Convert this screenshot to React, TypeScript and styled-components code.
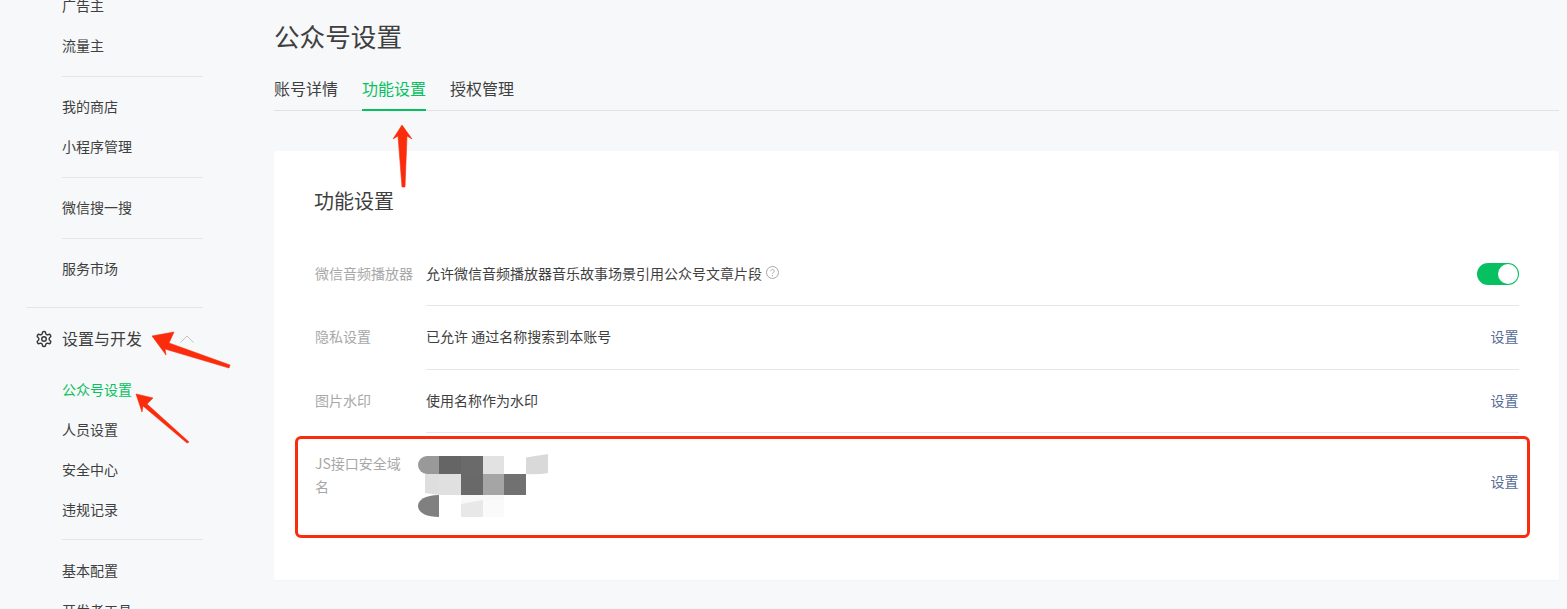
import React from "react";
import styled, { createGlobalStyle } from "styled-components";

const Global = createGlobalStyle`
  html, body { margin: 0; padding: 0; height: 609px; overflow: hidden; background: #f6f8f9; }
  body { font-family: "Noto Sans CJK SC", "Liberation Sans", sans-serif; color: #3f3f3f; }
  * { box-sizing: border-box; }
`;

const Page = styled.div`
  position: relative;
  display: flex;
  width: 1567px;
  height: 609px;
  overflow: hidden;
`;

const Sidebar = styled.nav`
  width: 274px;
  flex: none;
  padding: 0 71px 0 26px;
  margin-top: -14px;
`;

const Group = styled.div`
  margin-left: 36px;
  padding: 0 0 10px;
  margin-bottom: 10px;
  border-bottom: 1px solid #e4e6e9;
`;

const LastGroup = styled(Group)`
  border-bottom: none;
  margin-bottom: 0;
  padding-bottom: 0;
`;

const Item = styled.div<{ $active?: boolean; $raised?: boolean }>`
  height: 40px;
  line-height: ${(p) => (p.$raised ? "38px" : "40px")};
  font-size: 14px;
  color: ${(p) => (p.$active ? "#07c160" : "#3f3f3f")};
`;

const Section = styled.div`
  border-top: 1px solid #e4e6e9;
  margin-top: 18px;
  padding-top: 11px;
`;

const SectionHead = styled.div`
  display: flex;
  align-items: center;
  height: 40px;
  font-size: 16px;
  margin-bottom: 10px;
  color: #3f3f3f;
`;

const SectionLabel = styled.span`
  padding-bottom: 2px;
`;

const GearSlot = styled.span`
  width: 36px;
  display: flex;
  justify-content: flex-start;
  padding-left: 9px;
`;

const Chevron = styled.svg`
  margin-left: 38px;
`;

const Main = styled.main`
  flex: 1;
  padding-right: 8px;
`;

const Title = styled.h1`
  margin: 0;
  padding-top: 17px;
  height: 66px;
  font-size: 25.6px;
  line-height: 38px;
  font-weight: 400;
  color: #3f3f3f;
`;

const Tabs = styled.div`
  display: flex;
  gap: 24px;
  height: 45px;
  border-bottom: 1px solid #e0e2e5;
`;

const Tab = styled.div<{ $active?: boolean }>`
  height: 45px;
  line-height: 45px;
  font-size: 16px;
  color: ${(p) => (p.$active ? "#07c160" : "#3f3f3f")};
  border-bottom: 2px solid ${(p) => (p.$active ? "#07c160" : "transparent")};
`;

const Card = styled.section`
  margin-top: 40px;
  height: 429px;
  background: #fff;
  border-radius: 2px;
  padding: 36px 40px 0 40px;
  box-shadow: 0 1px 2px rgba(150, 150, 150, 0.05);
`;

const CardTitle = styled.h2`
  margin: 0 0 27px;
  font-size: 20px;
  line-height: 28px;
  font-weight: 400;
  color: #3f3f3f;
`;

const Row = styled.div<{ $height: number; $lift?: number; $last?: boolean }>`
  --lift: ${(p) => p.$lift ?? 0}px;
  display: flex;
  align-items: ${(p) => (p.$last ? "flex-start" : "center")};
  height: ${(p) => p.$height}px;
  padding: ${(p) => (p.$last ? "19px 0 21px" : "0")};
`;

const Label = styled.div`
  width: 112px;
  flex: none;
  font-size: 14px;
  line-height: 23px;
  color: #a8a8a8;
  padding: 0 12px var(--lift) 1px;
`;

const Value = styled.div`
  flex: 1;
  display: flex;
  align-items: center;
  font-size: 14px;
  line-height: 22px;
  color: #3f3f3f;
  padding-bottom: var(--lift);
`;

const RowBody = styled.div`
  flex: 1;
  display: flex;
  align-items: center;
  align-self: stretch;
  border-bottom: 1px solid #e6e7e9;
`;

const HelpIcon = styled.svg`
  margin-left: 4px;
`;

const Link = styled.span<{ $center?: boolean }>`
  font-size: 14px;
  color: #576b95;
  flex: none;
  padding-right: 0.5px;
  padding-bottom: var(--lift);
  ${(p) => (p.$center ? "align-self: center;" : "")}
`;

const Toggle = styled.span`
  flex: none;
  width: 42px;
  height: 22px;
  border-radius: 11px;
  background: #07c160;
  display: flex;
  justify-content: flex-end;
  padding: 1px;
`;

const Knob = styled.span`
  width: 20px;
  height: 20px;
  border-radius: 50%;
  background: #fff;
`;

const MosaicBox = styled.svg`
  display: block;
  margin-left: -8px;
  margin-top: 2px;
  height: 63px;
  width: 130px;
`;

const MosaicSlot = styled.div`
  flex: 1;
  height: 58px;
`;

const Highlight = styled.div`
  position: absolute;
  left: 295px;
  top: 436px;
  width: 1235px;
  height: 102px;
  border: 3px solid #fb2c0c;
  border-radius: 6px;
  pointer-events: none;
`;

const Arrows = styled.svg`
  position: absolute;
  left: 0;
  top: 0;
  pointer-events: none;
`;

const Mosaic = () => (
  <MosaicBox viewBox="418 454 130 63">
    <path d="M439 456h-12a9 9 0 0 0 0 18h12z" fill="#999" />
    <rect x="439" y="456" width="22" height="18" fill="#656565" />
    <rect x="461" y="456" width="22" height="18" fill="#6a6a6a" />
    <rect x="483" y="456" width="21" height="18" fill="#e2e2e2" />
    <path d="M526 457.500 L548 454 V473 Q537 475 526 474z" fill="#d9d9d9" />
    <path d="M425 474h14v21l-14-2z" fill="#dedede" />
    <rect x="439" y="474" width="22" height="21" fill="#e0e0e0" />
    <rect x="461" y="474" width="22" height="21" fill="#696969" />
    <rect x="483" y="474" width="21" height="21" fill="#a5a5a5" />
    <rect x="504" y="474" width="22" height="21" fill="#717171" />
    <path d="M439 495c-14 0-21 5-21 11s7 11 21 11z" fill="#808080" />
    <rect x="461" y="495" width="22" height="22" fill="#e8e8e8" />
    <rect x="483" y="495" width="21" height="22" fill="#fafafa" />
    <path d="M461 504l22-4h21v-5h-21l-22 0z" fill="#f8f8f8" />
  </MosaicBox>
);

export default function App() {
  return (
    <Page>
      <Global />
      <Sidebar>
        <Group>
          <Item $raised>广告主</Item>
          <Item $raised>流量主</Item>
        </Group>
        <Group>
          <Item $raised>我的商店</Item>
          <Item $raised>小程序管理</Item>
        </Group>
        <Group>
          <Item $raised>微信搜一搜</Item>
        </Group>
        <LastGroup>
          <Item $raised>服务市场</Item>
        </LastGroup>
        <Section>
          <SectionHead>
            <GearSlot>
              <svg width="18" height="18" viewBox="0 0 24 24" fill="none" stroke="#353535" strokeWidth="1.9" strokeLinecap="round" strokeLinejoin="round">
                <path d="M12.22 2h-.44a2 2 0 0 0-2 2v.18a2 2 0 0 1-1 1.73l-.43.25a2 2 0 0 1-2 0l-.15-.08a2 2 0 0 0-2.73.73l-.22.38a2 2 0 0 0 .73 2.73l.15.1a2 2 0 0 1 1 1.72v.51a2 2 0 0 1-1 1.74l-.15.09a2 2 0 0 0-.73 2.73l.22.38a2 2 0 0 0 2.73.73l.15-.08a2 2 0 0 1 2 0l.43.25a2 2 0 0 1 1 1.73V20a2 2 0 0 0 2 2h.44a2 2 0 0 0 2-2v-.18a2 2 0 0 1 1-1.73l.43-.25a2 2 0 0 1 2 0l.15.08a2 2 0 0 0 2.73-.73l.22-.39a2 2 0 0 0-.73-2.73l-.15-.08a2 2 0 0 1-1-1.74v-.5a2 2 0 0 1 1-1.74l.15-.09a2 2 0 0 0 .73-2.73l-.22-.38a2 2 0 0 0-2.73-.73l-.15.08a2 2 0 0 1-2 0l-.43-.25a2 2 0 0 1-1-1.73V4a2 2 0 0 0-2-2z" />
                <circle cx="12" cy="12" r="3" />
              </svg>
            </GearSlot>
            <SectionLabel>设置与开发</SectionLabel>
            <Chevron width="14" height="8" viewBox="0 0 14 8" fill="none" stroke="#c4c4c4" strokeWidth="1">
              <path d="M0.500 7.500 L7 1 L13.500 7.500" />
            </Chevron>
          </SectionHead>
          <LastGroup>
            <Item $active>公众号设置</Item>
            <Item>人员设置</Item>
            <Item>安全中心</Item>
          </LastGroup>
          <Group>
            <Item>违规记录</Item>
          </Group>
          <LastGroup>
            <Item>基本配置</Item>
            <Item>开发者工具</Item>
          </LastGroup>
        </Section>
      </Sidebar>

      <Main>
        <Title>公众号设置</Title>
        <Tabs>
          <Tab>账号详情</Tab>
          <Tab $active>功能设置</Tab>
          <Tab>授权管理</Tab>
        </Tabs>
        <Card>
          <CardTitle>功能设置</CardTitle>
          <Row $height={64} $lift={2}>
            <Label>微信音频播放器</Label>
            <RowBody>
              <Value>
                允许微信音频播放器音乐故事场景引用公众号文章片段
                <HelpIcon width="13" height="13" viewBox="0 0 13 13" fill="none">
                  <circle cx="6.500" cy="6.500" r="6" stroke="#a8a8a8" />
                  <path d="M4.800 5.200a1.700 1.700 0 1 1 2.600 1.400c-.6.400-.9.700-.9 1.300" stroke="#a8a8a8" />
                  <circle cx="6.500" cy="9.700" r=".6" fill="#a8a8a8" />
                </HelpIcon>
              </Value>
              <Toggle>
                <Knob />
              </Toggle>
            </RowBody>
          </Row>
          <Row $height={64} $lift={4}>
            <Label>隐私设置</Label>
            <RowBody>
              <Value>已允许 通过名称搜索到本账号</Value>
              <Link>设置</Link>
            </RowBody>
          </Row>
          <Row $height={63} $lift={2}>
            <Label>图片水印</Label>
            <RowBody>
              <Value>使用名称作为水印</Value>
              <Link>设置</Link>
            </RowBody>
          </Row>
          <Row $height={98} $last>
            <Label>JS接口安全域名</Label>
            <MosaicSlot>
              <Mosaic />
            </MosaicSlot>
            <Link $center>设置</Link>
          </Row>
        </Card>
      </Main>

      <Highlight />
      <Arrows width="1567" height="609" viewBox="0 0 1567 609">
        <g fill="#fb2c0c" stroke="#fb2c0c" strokeWidth="0.6" strokeLinejoin="round">
          <polygon points="402,125 412,139 407,136 405,187 402,187 398,136 393,139" />
          <polygon points="152,336 174,332 169,343 230,365 229,368 165,349 166,355" />
          <polygon points="136,394 153,398 147,404 189,442 187,443 143,406 142,412" />
        </g>
      </Arrows>
    </Page>
  );
}
